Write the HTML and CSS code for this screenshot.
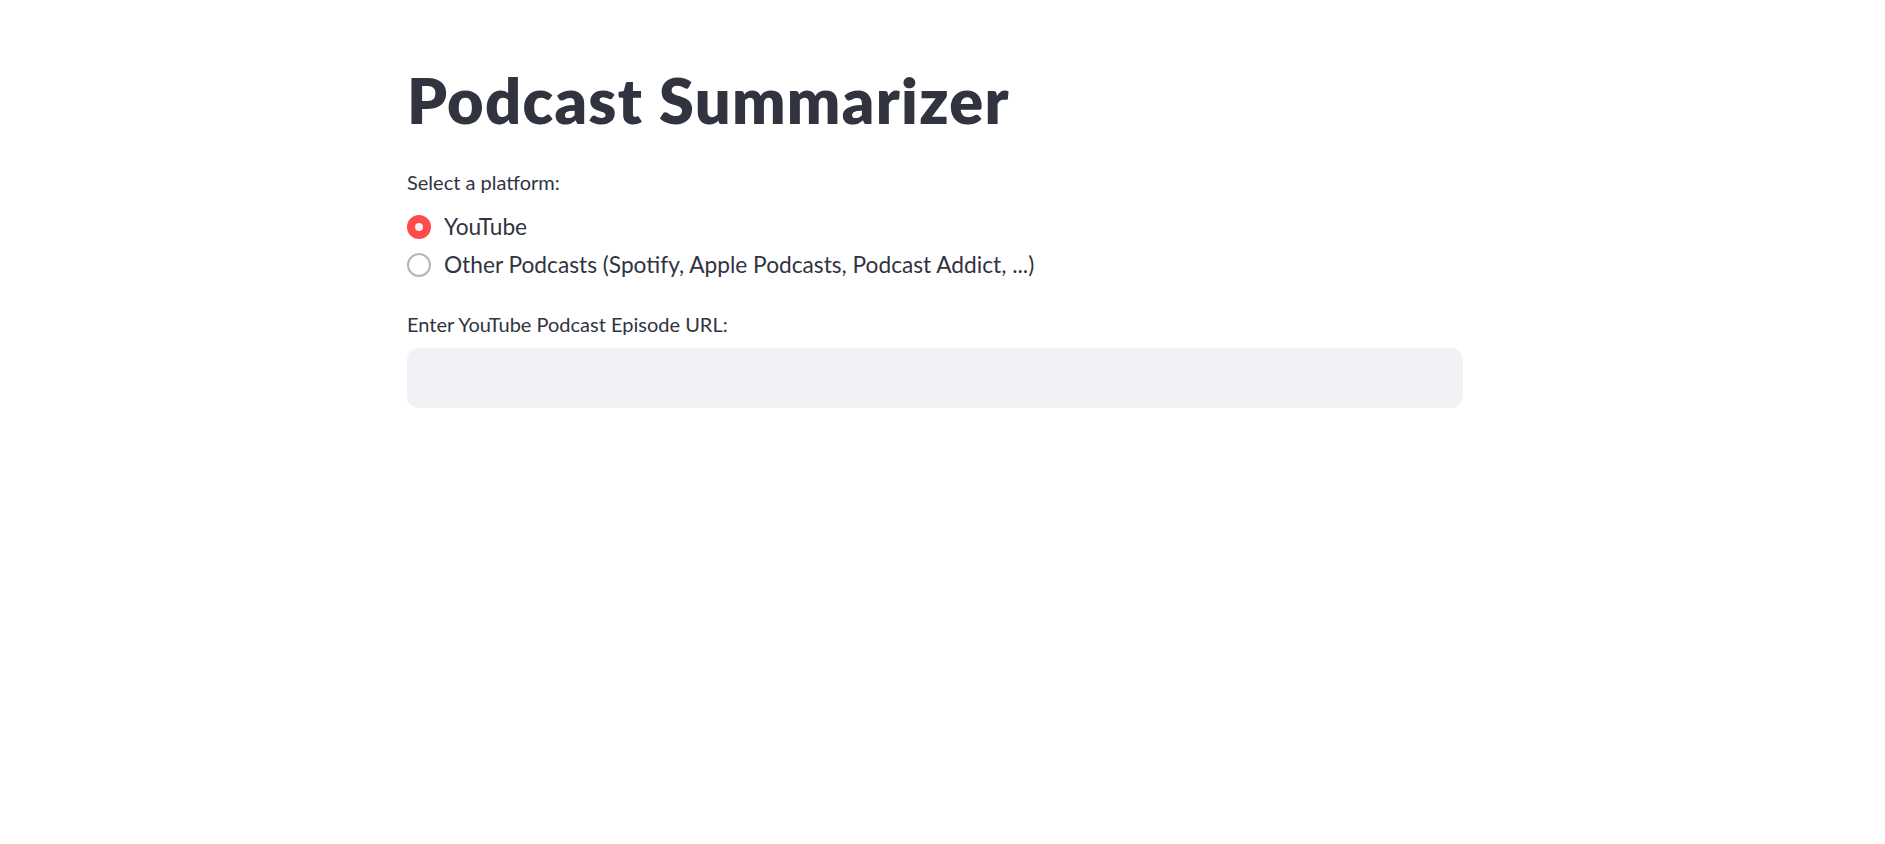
FILE: index.html
```html
<!DOCTYPE html>
<html lang="en">
<head>
<meta charset="utf-8">
<title>Podcast Summarizer</title>
<link rel="stylesheet" href="styles.css">
</head>
<body>
<div class="app">
  <main class="main">
    <h1 class="title">Podcast Summarizer</h1>
    <div class="widget">
      <div class="label">Select a platform:</div>
      <div class="radio-group">
        <label class="radio-row">
          <span class="radio radio-on"><span class="dot"></span></span>
          <span class="radio-text">YouTube</span>
        </label>
        <label class="radio-row">
          <span class="radio radio-off"></span>
          <span class="radio-text">Other Podcasts (Spotify, Apple Podcasts, Podcast Addict, ...)</span>
        </label>
      </div>
    </div>
    <div class="widget widget-input">
      <div class="label">Enter YouTube Podcast Episode URL:</div>
      <div class="input"></div>
    </div>
  </main>
</div>
</body>
</html>
```

FILE: styles.css
```css
html, body {
  margin: 0;
  padding: 0;
  background: #ffffff;
}
body {
  font-family: Lato, "Noto Sans", sans-serif;
  color: #31333f;
}
.app {
  padding-right: 15px;
}
.main {
  max-width: 1104px;
  margin: 0 auto;
  padding: 64px 24px 0;
  box-sizing: border-box;
}
.title {
  margin: 0;
  font-size: 63px;
  line-height: 72px;
  font-weight: 800;
  letter-spacing: 1.3px;
  color: #31333f;
}
.widget {
  margin-top: 34px;
}
.label {
  font-size: 20px;
  line-height: 24px;
  color: #31333f;
}
.radio-group {
  display: flex;
  flex-direction: column;
  gap: 4px;
  margin-top: 16px;
}
.radio-row {
  display: flex;
  align-items: center;
  height: 34px;
  gap: 13px;
}
.radio {
  width: 24px;
  height: 24px;
  border-radius: 50%;
  box-sizing: border-box;
  display: flex;
  align-items: center;
  justify-content: center;
  flex: none;
}
.radio-on {
  background: #ff4b4b;
}
.dot {
  width: 8px;
  height: 8px;
  border-radius: 50%;
  background: #f0f2f6;
}
.radio-off {
  border: 2px solid #b4b5b8;
  background: #ffffff;
}
.radio-text {
  font-size: 22.7px;
  line-height: 34px;
}
.widget-input {
  margin-top: 30px;
}
.input {
  margin-top: 12px;
  height: 60px;
  border-radius: 12px;
  background: #f0f2f6;
}
```
